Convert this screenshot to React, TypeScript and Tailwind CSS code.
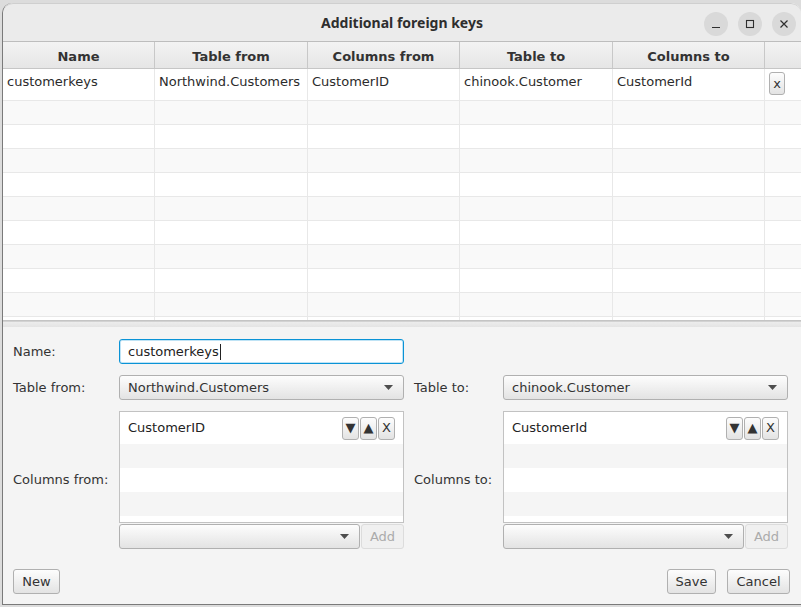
import React from "react";

const font = "font-['DejaVu_Sans',sans-serif]";

type Col = { title: string; width: string; value: string };

const cols: Col[] = [
  { title: "Name", width: "w-[152px]", value: "customerkeys" },
  { title: "Table from", width: "w-[153px]", value: "Northwind.Customers" },
  { title: "Columns from", width: "w-[152px]", value: "CustomerID" },
  { title: "Table to", width: "w-[153px]", value: "chinook.Customer" },
  { title: "Columns to", width: "w-[152px]", value: "CustomerId" },
];

const btn =
  "border border-[#b0b0b0] rounded-[3px] bg-linear-to-b from-[#fdfdfd] to-[#e3e3e3] text-[#333] text-[13px] flex items-center";

const Arrow = () => (
  <svg width="9" height="5" viewBox="0 0 9 5" className="shrink-0">
    <path d="M0 0 H9 L4.5 5 Z" fill="#4d4d4d" />
  </svg>
);

const Combo: React.FC<{ text?: string; width: string }> = ({ text, width }) => (
  <div className={`${width} h-[25px] ${btn} justify-between pl-[8px] pr-[10px]`}>
    <span>{text}</span>
    <Arrow />
  </div>
);

const ColumnList: React.FC<{ value: string }> = ({ value }) => (
  <div className="flex flex-col w-[285px]">
    <div className="h-[112px] border border-[#c2c2c2] bg-white overflow-hidden flex flex-col">
      <div className="h-[32px] shrink-0 flex items-center justify-between pl-[8px] pr-[8px] bg-white">
        <span className="text-[13px] text-[#222]">{value}</span>
        <div className="flex gap-[1px]">
          <div className={`${btn} justify-center w-[17px] h-[23px] text-[12px]`}>▼</div>
          <div className={`${btn} justify-center w-[17px] h-[23px] text-[12px]`}>▲</div>
          <div className={`${btn} justify-center w-[17px] h-[23px] text-[13px]`}>X</div>
        </div>
      </div>
      <div className="h-[24px] shrink-0 bg-[#f5f5f5]" />
      <div className="h-[24px] shrink-0 bg-white" />
      <div className="h-[24px] shrink-0 bg-[#f5f5f5]" />
      <div className="h-[24px] shrink-0 bg-white" />
    </div>
    <div className="flex mt-[1px] gap-[1px]">
      <Combo width="w-[241px]" />
      <div className="w-[43px] h-[25px] border border-[#dcdcdc] rounded-[3px] bg-[#f0f0f0] text-[#ababab] text-[13px] flex items-center justify-center">
        Add
      </div>
    </div>
  </div>
);

export default function App() {
  const rows = Array.from({ length: 10 });
  return (
    <div className={`w-[801px] h-[607px] bg-[#dcdcdc] pt-[3px] overflow-hidden ${font}`}>
      <div className="ml-[2px] w-[799px] h-[602px] border-l border-b border-[#7a7a7a] bg-[#f4f4f4] flex flex-col rounded-tl-[10px] rounded-tr-[10px] overflow-hidden">
        {/* title bar */}
        <div className="h-[39px] shrink-0 border-t border-b border-t-[#cfcfcf] border-b-[#bdbdbd] bg-[#ebebeb] rounded-tl-[10px] rounded-tr-[10px] relative flex items-center justify-center">
          <span className="font-['Noto_Sans',sans-serif] font-bold text-[14px] text-[#2e2e2e]">
            Additional foreign keys
          </span>
          <div className="absolute right-[5px] top-[8px] flex gap-[10px]">
            <div className="w-[24px] h-[24px] rounded-full bg-[#d9d9d9] flex items-center justify-center">
              <svg width="10" height="10" viewBox="0 0 10 10">
                <path d="M1 8.5 H9" stroke="#2e2e2e" strokeWidth="1.2" />
              </svg>
            </div>
            <div className="w-[24px] h-[24px] rounded-full bg-[#d9d9d9] flex items-center justify-center">
              <svg width="10" height="10" viewBox="0 0 10 10">
                <rect x="1.5" y="1.5" width="7" height="7" fill="none" stroke="#2e2e2e" strokeWidth="1.1" />
              </svg>
            </div>
            <div className="w-[24px] h-[24px] rounded-full bg-[#d9d9d9] flex items-center justify-center">
              <svg width="10" height="10" viewBox="0 0 10 10">
                <path d="M1.5 1.5 L8.5 8.5 M8.5 1.5 L1.5 8.5" stroke="#2e2e2e" strokeWidth="1.2" />
              </svg>
            </div>
          </div>
        </div>

        {/* table */}
        <div className="flex flex-col shrink-0 bg-white">
          <div className="flex h-[27px] border-b border-[#c6c6c6] bg-linear-to-b from-[#f3f3f3] to-[#e6e6e6]">
            {cols.map((c) => (
              <div
                key={c.title}
                className={`${c.width} border-r border-[#c8c8c8] flex items-center justify-center pt-[3px] font-bold text-[13px] text-[#333]`}
              >
                {c.title}
              </div>
            ))}
            <div className="w-[36px]" />
          </div>
          <div className="h-[251px] overflow-hidden flex flex-col border-b border-[#c4c4c4] box-content">
            <div className="flex h-[32px] shrink-0 border-b border-[#e8e8e8] bg-white">
              {cols.map((c) => (
                <div
                  key={c.title}
                  className={`${c.width} border-r border-[#e8e8e8] pl-[4px] pt-[3px] text-[13px] text-[#2b2b2b] whitespace-nowrap overflow-hidden`}
                >
                  {c.value}
                </div>
              ))}
              <div className="w-[36px] flex items-start pl-[4px] pt-[3px]">
                <div className={`${btn} justify-center w-[16px] h-[23px] text-[12px] text-[#2a3a5a]`}>x</div>
              </div>
            </div>
            {rows.map((_, i) => (
              <div
                key={i}
                className={`flex h-[24px] shrink-0 border-b border-[#e8e8e8] ${i % 2 === 0 ? "bg-[#f9f9f9]" : "bg-white"}`}
              >
                {cols.map((c) => (
                  <div key={c.title} className={`${c.width} border-r border-[#e8e8e8]`} />
                ))}
                <div className="w-[36px]" />
              </div>
            ))}
          </div>
        </div>

        {/* split divider */}
        <div className="h-[6px] shrink-0 border-t border-[#d2d2d2] bg-linear-to-b from-[#ececec] to-[#e4e4e4]" />

        {/* form */}
        <div className="flex-1 flex flex-col pt-[12px] pl-[10px] pr-[11px] text-[13px] text-[#333]">
          <div className="flex items-center h-[25px]">
            <span className="w-[106px]">Name:</span>
            <div className="w-[285px] h-[25px] rounded-[3px] border border-[#0a93d6] bg-white shadow-[inset_0_0_0_1px_#bfe3f5] flex items-center pl-[8px] text-[#222]">
              customerkeys
              <span className="w-[1px] h-[16px] bg-[#222] ml-[1px]" />
            </div>
          </div>

          <div className="flex items-center h-[25px] mt-[11px]">
            <span className="w-[106px]">Table from:</span>
            <Combo text="Northwind.Customers" width="w-[285px]" />
            <span className="w-[99px] pl-[10px]">Table to:</span>
            <Combo text="chinook.Customer" width="w-[285px]" />
          </div>

          <div className="flex items-center mt-[11px]">
            <span className="w-[106px]">Columns from:</span>
            <ColumnList value="CustomerID" />
            <span className="w-[99px] pl-[10px]">Columns to:</span>
            <ColumnList value="CustomerId" />
          </div>

          <div className="flex items-center mt-[20px]">
            <div className={`${btn} justify-center w-[47px] h-[25px]`}>New</div>
            <div className="flex-1" />
            <div className={`${btn} justify-center w-[49px] h-[25px]`}>Save</div>
            <div className={`${btn} justify-center w-[63px] h-[25px] ml-[11px]`}>Cancel</div>
          </div>
        </div>
      </div>
    </div>
  );
}
